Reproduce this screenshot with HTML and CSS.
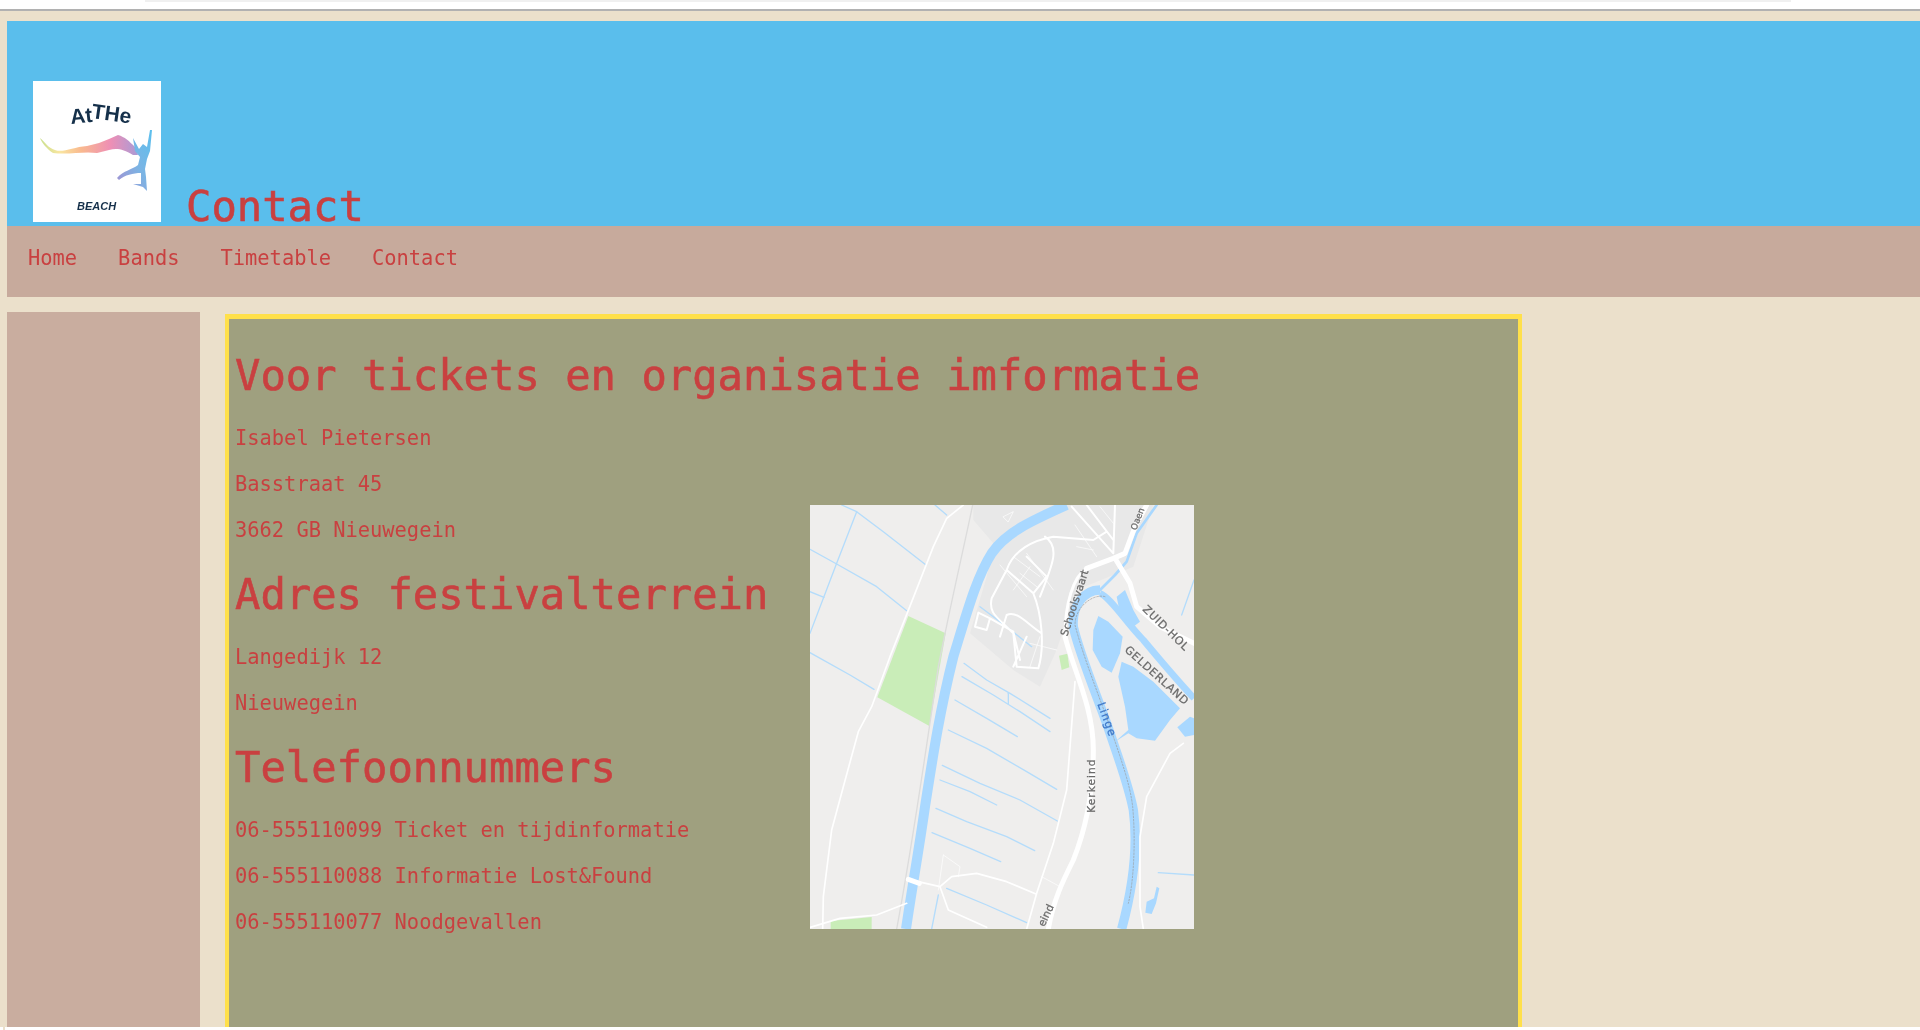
FILE: index.html
```html
<!DOCTYPE html>
<html>
<head>
<title>Contact</title>
<meta charset="utf-8" />
<link rel="stylesheet" href="styles.css">
</head>
<body>
<div class="browserbar"><div class="browserstrip"></div></div>
<div class="page">
  <div class="header">
    <svg class="logo" viewBox="0 0 128 141">
      <defs>
        <linearGradient id="rainbow" x1="0" x2="1" y1="0" y2="0">
          <stop offset="0" stop-color="#c9e08f"/>
          <stop offset="0.2" stop-color="#f9e6a0"/>
          <stop offset="0.42" stop-color="#f9b98f"/>
          <stop offset="0.72" stop-color="#ee8fb5"/>
          <stop offset="1" stop-color="#a99bd6"/>
        </linearGradient>
        <linearGradient id="dancer" x1="0" x2="1" y1="1" y2="0">
          <stop offset="0" stop-color="#a58fd0"/>
          <stop offset="0.5" stop-color="#7cb4e4"/>
          <stop offset="1" stop-color="#5cc0ee"/>
        </linearGradient>
      </defs>
      <rect width="128" height="141" fill="#fff"/>
      <text class="logo-top" x="38" y="43" transform="rotate(-6 38 43)">At</text>
      <text class="logo-top" x="58" y="37" transform="rotate(8 58 37)">THe</text>
      <path fill="url(#rainbow)" d="M7 57 C12 61 15 67 22 69 C30 72 40 66 54 65 L66 62 C74 59 80 56 85 54 C92 56 96 60 102 66 L105 74 L100 74 C90 68 84 67 76 69 L64 72 C50 70 36 74 20 72 C14 68 9 62 7 57 Z"/>
      <path fill="url(#dancer)" d="M100 57 L106 68 L110 63 L114 66 L117 49 L119 49 L117 70 L114 78 L112 88 L113 96 L114 110 L110 106 L100 103 L108 103 L108 92 C100 92 92 94 86 99 L84 97 C90 90 100 88 105 84 L107 76 L102 70 Z"/>
      <text class="logo-bottom" x="44" y="129">BEACH</text>
    </svg>
    <h1>Contact</h1>
  </div>
  <div class="nav">
    <a href="#">Home</a>
    <a href="#">Bands</a>
    <a href="#">Timetable</a>
    <a href="#">Contact</a>
  </div>
  <div class="columns">
    <div class="sidebar"></div>
    <div class="main">
      <div class="info">
        <h2>Voor tickets en organisatie imformatie</h2>
        <p>Isabel Pietersen</p>
        <p>Basstraat 45</p>
        <p>3662 GB Nieuwegein</p>
        <h2>Adres festivalterrein</h2>
        <p>Langedijk 12</p>
        <p>Nieuwegein</p>
        <h2>Telefoonnummers</h2>
        <p>06-555110099 Ticket en tijdinformatie</p>
        <p>06-555110088 Informatie Lost&amp;Found</p>
        <p>06-555110077 Noodgevallen</p>
      </div>
      <svg class="map" viewBox="30 45 1152 1272">
        <rect x="30" y="45" width="1152" height="1272" fill="#efeeed"/>
        <path class="built" d="M520 45 L1060 45 L1000 230 L830 300 L770 480 L720 590 L640 540 L510 430 L560 260 L580 160 L520 90 Z"/>
        <path class="park" d="M325 378 L437 430 L388 708 L232 622 Z"/>
        <path class="park" d="M92 1293 L215 1281 L215 1317 L92 1317 Z"/>
        <path class="park" d="M777 497 L802 491 L808 532 L785 540 Z"/>
        <path class="canal" d="M800 45 C700 90 620 125 575 190 C530 260 500 370 460 500 C420 660 400 790 375 950 C355 1090 335 1200 318 1317"/>
        <path class="river" d="M900 300 C850 300 815 350 820 410 C835 480 880 590 920 700 C950 790 985 880 1000 960 C1012 1050 1005 1170 965 1317"/>
        <path class="branch" d="M900 310 C930 320 980 400 1030 450 C1080 510 1140 580 1182 625"/>
        <path class="branch-thin" d="M900 300 L945 255 L980 215 L1010 130 L1070 45"/>
        <path class="lake" d="M895 378 L925 395 L968 440 L960 490 L935 548 L905 530 L878 480 L880 420 Z"/>
        <path class="lake" d="M965 515 L1000 530 L1060 575 L1140 655 L1110 690 L1065 752 L1010 745 L985 730 L945 755 L985 720 L975 650 L955 560 Z"/>
        <path class="lake" d="M1170 680 L1182 685 L1182 735 L1155 740 L1132 712 Z"/>
        <path class="lake" d="M950 320 L975 300 L1000 360 L1020 395 L1000 410 L960 370 Z"/>
        <path class="lake" d="M1070 1190 L1078 1195 L1068 1240 L1055 1272 L1036 1268 L1040 1235 L1062 1225 Z"/>
        <path class="dash" d="M915 320 C880 310 825 350 825 405 C850 500 890 600 930 710 C960 800 990 880 998 950 C1008 1060 1000 1180 985 1240"/>
        <path class="ditch" d="M125 45 L170 65 L250 125 L378 225"/>
        <path class="ditch" d="M170 65 L110 220 L30 430"/>
        <path class="ditch" d="M30 178 L110 222 L230 290 L320 362"/>
        <path class="ditch" d="M30 305 L72 322"/>
        <path class="ditch" d="M30 488 L150 555 L222 598"/>
        <path class="ditch" d="M405 45 L440 75"/>
        <path class="ditch" d="M492 520 L560 570 L630 610 L750 685"/>
        <path class="ditch" d="M486 560 L580 615 L660 665 L750 725"/>
        <path class="ditch" d="M625 610 L625 642"/>
        <path class="ditch" d="M465 630 L560 685 L652 740"/>
        <path class="ditch" d="M445 720 L560 775 L680 845 L770 898"/>
        <path class="ditch" d="M427 826 L540 880 L660 930 L772 993"/>
        <path class="ditch" d="M420 870 L510 905 L590 945"/>
        <path class="ditch" d="M408 955 L500 995 L620 1040 L704 1082"/>
        <path class="ditch" d="M396 1028 L510 1075 L602 1115"/>
        <path class="ditch" d="M440 1195 L560 1245 L680 1298"/>
        <path class="ditch" d="M415 1215 L395 1317"/>
        <path class="ditch" d="M540 350 L620 410 L695 470"/>
        <path class="ditch" d="M1075 1148 L1182 1155"/>
        <path class="ditch" d="M1182 270 L1145 375"/>
        <path class="rail" d="M518 45 C490 180 450 350 415 530 C385 730 340 1050 290 1317"/>
        <path class="road-thin" d="M490 45 L440 85 L400 170 L345 310 L270 500 L215 650 L175 725 L130 890 L95 1020 L70 1220 L68 1317"/>
        <path class="road-thin" d="M30 1312 L120 1285 L230 1275 L320 1240"/>
        <path class="road-thin" d="M325 1168 L420 1190 L455 1160 L530 1150 L620 1175 L708 1212"/>
        <path class="road-thin" d="M420 1190 L445 1260 L560 1312"/>
        <path class="road-thin" d="M825 575 L800 900 L760 1060 L710 1210 L680 1317"/>
        <path class="road-thin" d="M1150 760 L1110 790 L1040 920 L1020 1040 L1020 1250 L1030 1317"/>
        <path class="road-fine" d="M430 1095 L415 1200 M430 1095 L480 1130 L475 1160 M725 1160 L780 1190"/>
        <path class="road-fine" d="M600 225 L680 320 M680 190 L760 300 M770 480 L690 460 M640 200 L720 260 M825 105 L890 200 M900 50 L940 100 M660 250 L710 290 M690 230 L640 300 M720 440 L690 530 M610 80 L640 65 L625 95 Z M830 170 L880 180"/>
        <path class="road-street" d="M575 325 C565 370 590 380 640 430 L650 530 L715 535 C735 470 725 370 700 310 L620 240 C640 180 700 150 760 140 L880 150 L920 125 M620 240 L575 325 M620 375 C650 360 680 400 725 430 M535 368 L525 410 L560 420 L570 385 Z M570 385 L640 425 L660 510 M640 530 L680 440 M735 140 C780 170 760 220 720 320 M680 200 L740 260 L700 310 M620 375 L600 440 M815 50 L940 190 M860 45 L940 150 M940 190 L945 45"/>
        <path class="road-main" d="M795 440 C820 540 880 650 880 780 C880 900 860 1010 820 1110 C790 1170 760 1230 745 1317"/>
        <path class="road-main" d="M860 235 L940 205 L975 190 L1005 110 L1040 45"/>
        <path class="road-main" d="M945 205 L990 280 L1010 350 L1080 410 L1182 460"/>
        <path class="road-main-thin" d="M860 235 C820 260 795 340 795 440"/>
        <path class="road-main" d="M325 1168 L358 1180"/>
        <text class="label small" transform="translate(1008 122) rotate(-68)">Oaen</text>
        <text class="label" transform="translate(802 440) rotate(-72)">Schoolsvaart</text>
        <text class="label big" transform="translate(1026 360) rotate(44)">ZUID-HOL</text>
        <text class="label big" transform="translate(972 482) rotate(42)">GELDERLAND</text>
        <text class="label blue" transform="translate(892 642) rotate(70)">Linge</text>
        <text class="label wide" transform="translate(884 968) rotate(-90)">Kerkeind</text>
        <text class="label" transform="translate(733 1312) rotate(-65)">eind</text>
      </svg>
    </div>
  </div>
</div>
<div class="bottomstrip"><div class="bottomnub"></div></div>
</body>
</html>
```

FILE: styles.css
```css
html, body {
  margin: 0;
  padding: 0;
  height: 1030px;
  overflow: hidden;
  background: #fff;
}
body {
  display: flex;
  flex-direction: column;
  font-family: "DejaVu Sans Mono", monospace;
  color: #c94040;
}
.browserbar {
  height: 9px;
  background: #fff;
  border-bottom: 2px solid #b1b1b1;
  flex: none;
}
.browserstrip {
  height: 2px;
  margin: 0 129px 0 145px;
  background: #f0f0f0;
}
.page {
  flex: 1;
  min-height: 0;
  overflow: hidden;
  background: #ebe0cb;
  padding: 10px 0 0 7px;
  display: flex;
  flex-direction: column;
}
.bottomstrip {
  height: 3px;
  flex: none;
  background: #fff;
}
.bottomnub {
  width: 2px;
  height: 3px;
  margin-left: 3px;
  background: #ebe0cb;
}

.header {
  flex: none;
  height: 205px;
  background: #5abeec;
  display: flex;
  align-items: flex-end;
  padding: 0 0 4px 26px;
  box-sizing: border-box;
}
.logo {
  width: 128px;
  height: 141px;
  display: block;
  flex: none;
  filter: blur(0.5px);
}
.logo-top {
  font-family: "Liberation Sans", sans-serif;
  font-size: 21px;
  font-weight: bold;
  fill: #15304a;
}
.logo-bottom {
  font-family: "Liberation Sans", sans-serif;
  font-size: 11px;
  font-weight: bold;
  font-style: italic;
  fill: #15304a;
}
h1 {
  margin: 0 0 -9px 25px;
  font-size: 42.2px;
  font-weight: normal;
  line-height: 49px;
  -webkit-text-stroke: 0.6px #c94040;
  filter: blur(0.4px);
}

.nav {
  flex: none;
  height: 71px;
  background: #c7aa9c;
  display: flex;
  align-items: center;
  gap: 41px;
  padding: 0 0 8px 21px;
  box-sizing: border-box;
  font-size: 20.4px;
}
.nav a {
  color: #c94040;
  text-decoration: none;
  filter: blur(0.4px);
}

.columns {
  flex: 1;
  min-height: 0;
  display: flex;
  margin-top: 15px;
}
.sidebar {
  width: 193px;
  flex: none;
  background: #c9ad9f;
}
.main {
  width: 1297px;
  flex: none;
  box-sizing: border-box;
  margin: 2px 0 0 25px;
  background: #9fa07f;
  border: solid #ffe04a;
  border-width: 5px 4px 0 4px;
  padding: 0 0 0 6px;
  display: flex;
}
.info {
  width: 575px;
  flex: none;
  padding-top: 4px;
}
h2 {
  margin: 28px 0 26px;
  font-size: 42.2px;
  font-weight: normal;
  line-height: 49px;
  white-space: nowrap;
  -webkit-text-stroke: 0.6px #c94040;
  filter: blur(0.4px);
}
p {
  margin: 22px 0;
  font-size: 20.4px;
  line-height: 24px;
  white-space: nowrap;
  filter: blur(0.4px);
}

.map {
  width: 384px;
  height: 424px;
  flex: none;
  margin-top: 186px;
  filter: blur(0.4px);
}
.map path {
  fill: none;
  stroke-linejoin: round;
  stroke-linecap: round;
}
.map .built { fill: #e8e8e8; }
.map .park { fill: #c9edb8; }
.map .lake { fill: #a9d8ff; }
.map .canal { stroke: #a9d8ff; stroke-width: 30; stroke-linecap: butt; }
.map .river { stroke: #a9d8ff; stroke-width: 28; stroke-linecap: butt; }
.map .branch { stroke: #a9d8ff; stroke-width: 20; stroke-linecap: butt; }
.map .branch-thin { stroke: #a9d8ff; stroke-width: 8; }
.map .dash { stroke: #9a9a9a; stroke-width: 2; stroke-dasharray: 5 5; }
.map .ditch { stroke: #b4dcfb; stroke-width: 4; }
.map .rail { stroke: #dcdcdc; stroke-width: 4; }
.map .road-thin { stroke: #fff; stroke-width: 5; }
.map .road-fine { stroke: #fff; stroke-width: 2; }
.map .road-street { stroke: #fff; stroke-width: 6; }
.map .road-main { stroke: #fff; stroke-width: 15; }
.map .road-main-thin { stroke: #fff; stroke-width: 9; }
.map .label {
  font-family: "DejaVu Sans", sans-serif;
  font-size: 32px;
  fill: #6a6a6a;
  stroke: #6a6a6a;
  stroke-width: 0.8;
}
.map .small { font-size: 26px; }
.map .wide { letter-spacing: 3px; }
.map .big { font-size: 33px; letter-spacing: 2px; }
.map .blue { font-size: 34px; letter-spacing: 3px; fill: #3f78c8; stroke: #3f78c8; }
```
